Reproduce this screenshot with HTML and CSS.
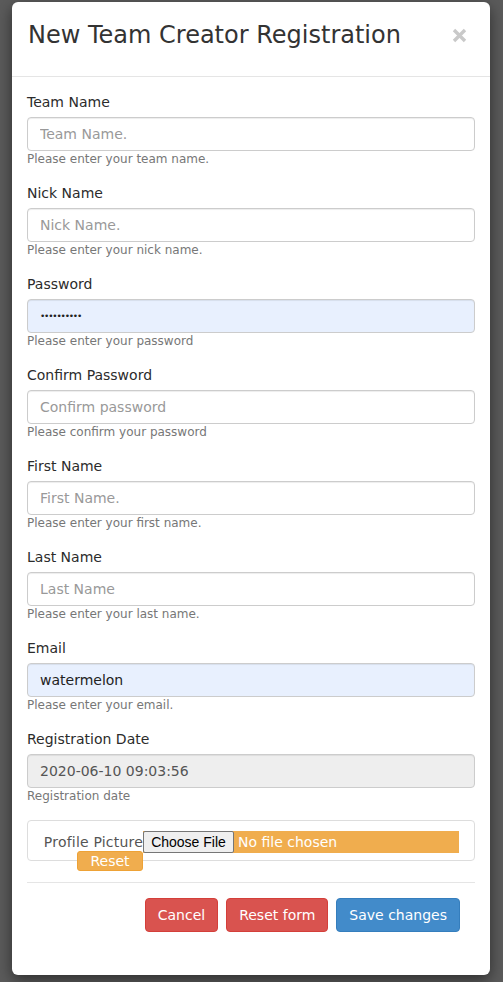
FILE: index.html
```html
<!DOCTYPE html>
<html lang="en">
<head>
<meta charset="utf-8">
<title>New Team Creator Registration</title>
<link rel="stylesheet" href="styles.css">
</head>
<body>
<div class="modal">
  <div class="modal-header">
    <h4 class="modal-title">New Team Creator Registration</h4>
    <button class="close" type="button" aria-label="Close">
      <svg width="15" height="15" viewBox="0 0 15 15"><path d="M2 2 L13 13 M13 2 L2 13" stroke="#c9c9c9" stroke-width="3.4" stroke-linecap="butt"/></svg>
    </button>
  </div>
  <form class="modal-body">
    <div class="form-group">
      <label class="label">Team Name</label>
      <input class="input" type="text" placeholder="Team Name.">
      <span class="help">Please enter your team name.</span>
    </div>
    <div class="form-group">
      <label class="label">Nick Name</label>
      <input class="input" type="text" placeholder="Nick Name.">
      <span class="help">Please enter your nick name.</span>
    </div>
    <div class="form-group">
      <label class="label">Password</label>
      <input class="input input-auto input-pass" type="password" value="abcdefghij">
      <span class="help">Please enter your password</span>
    </div>
    <div class="form-group">
      <label class="label">Confirm Password</label>
      <input class="input" type="password" placeholder="Confirm password">
      <span class="help">Please confirm your password</span>
    </div>
    <div class="form-group">
      <label class="label">First Name</label>
      <input class="input" type="text" placeholder="First Name.">
      <span class="help">Please enter your first name.</span>
    </div>
    <div class="form-group">
      <label class="label">Last Name</label>
      <input class="input" type="text" placeholder="Last Name">
      <span class="help">Please enter your last name.</span>
    </div>
    <div class="form-group">
      <label class="label">Email</label>
      <input class="input input-auto" type="text" value="watermelon">
      <span class="help">Please enter your email.</span>
    </div>
    <div class="form-group">
      <label class="label">Registration Date</label>
      <input class="input input-readonly" type="text" value="2020-06-10 09:03:56" readonly>
      <span class="help">Registration date</span>
    </div>
    <div class="file-box">
      <div class="file-label-col">
        <span class="file-label">Profile Picture</span>
        <button class="btn-reset-small" type="button">Reset</button>
      </div>
      <div class="file-input">
        <span class="file-btn">Choose File</span>
        <span class="file-text">No file chosen</span>
      </div>
    </div>
    <hr class="divider">
    <div class="footer">
      <button class="btn btn-danger" type="button">Cancel</button>
      <button class="btn btn-danger" type="button">Reset form</button>
      <button class="btn btn-primary" type="button">Save changes</button>
    </div>
  </form>
</div>
</body>
</html>
```
FILE: styles.css
```css
html, body {
  margin: 0;
  padding: 0;
}
body {
  background: #5b5b5b;
  font-family: "DejaVu Sans", Verdana, sans-serif;
  font-size: 14px;
  color: #333;
  height: 982px;
  overflow: hidden;
}
.modal {
  box-sizing: border-box;
  width: 478px;
  margin: 2px 0 0 12px;
  background: #fff;
  border-radius: 6px;
  box-shadow: 0 5px 15px rgba(0, 0, 0, 0.5);
}
.modal-header {
  display: flex;
  align-items: center;
  justify-content: space-between;
  padding: 11px 23px 19px 16px;
  border-bottom: 1px solid #e5e5e5;
}
.modal-title {
  margin: 0;
  font-size: 24px;
  line-height: 44px;
  font-weight: normal;
  color: #333;
}
.close {
  display: flex;
  padding: 0;
  margin: 0;
  border: 0;
  background: none;
}
.modal-body {
  display: block;
  margin: 0;
  padding: 15px 15px 15px;
}
.form-group {
  display: flex;
  flex-direction: column;
  margin-bottom: 15px;
}
.label {
  display: block;
  font-size: 14px;
  line-height: 20px;
  margin-bottom: 5px;
  color: #2b2b2b;
}
.input {
  box-sizing: border-box;
  width: 100%;
  height: 34px;
  margin: 0;
  padding: 6px 12px;
  border: 1px solid #ccc;
  border-radius: 4px;
  font-family: "DejaVu Sans", Verdana, sans-serif;
  font-size: 14px;
  color: #555;
  background: #fff;
  box-shadow: inset 0 1px 1px rgba(0, 0, 0, 0.075);
  outline: none;
}
.input::placeholder {
  color: #999;
}
.input-auto {
  background: #e8f0fe;
  color: #222;
}
.input-pass {
  font-size: 9px;
  letter-spacing: -1.2px;
  color: #222;
}
.input-readonly {
  background: #eee;
  color: #555;
}
.help {
  display: block;
  font-size: 12px;
  line-height: 17px;
  color: #777;
}
.file-box {
  box-sizing: border-box;
  display: flex;
  align-items: flex-start;
  height: 41px;
  padding: 10px 15px;
  border: 1px solid #ddd;
  border-radius: 4px;
}
.file-label-col {
  display: flex;
  flex-direction: column;
  align-items: flex-end;
  width: 100px;
  flex: none;
}
.file-label {
  line-height: 22px;
  font-size: 14px;
  letter-spacing: 0.2px;
  color: #555;
  white-space: nowrap;
}
.btn-reset-small {
  margin: -2px 0 0;
  width: 66px;
  height: 20px;
  padding: 0;
  border: 1px solid #eea236;
  border-radius: 3px;
  background: #f0ad4e;
  color: #fff;
  font-family: "DejaVu Sans", Verdana, sans-serif;
  font-size: 14px;
  line-height: 18px;
}
.file-input {
  display: flex;
  align-items: center;
  width: 316px;
  height: 22px;
  background: #f0ad4e;
}
.file-btn {
  box-sizing: border-box;
  display: flex;
  align-items: center;
  justify-content: center;
  width: 91px;
  height: 22px;
  border: 1px solid #767676;
  border-radius: 2px;
  background: #efefef;
  color: #000;
  font-family: "Liberation Sans", Arial, sans-serif;
  font-size: 14px;
}
.file-text {
  margin-left: 4px;
  color: #fff;
  font-size: 14px;
  white-space: nowrap;
}
.divider {
  margin: 21px 0 0;
  border: 0;
  border-top: 1px solid #e5e5e5;
}
.footer {
  display: flex;
  justify-content: flex-end;
  gap: 8px;
  margin-top: 15px;
  padding: 0 15px 28px 0;
}
.btn {
  box-sizing: border-box;
  height: 34px;
  padding: 6px 12px;
  border: 1px solid transparent;
  border-radius: 4px;
  font-family: "DejaVu Sans", Verdana, sans-serif;
  font-size: 14px;
  line-height: 20px;
  color: #fff;
  cursor: pointer;
}
.btn-danger {
  background: #d9534f;
  border-color: #d43f3a;
}
.btn-primary {
  background: #428bca;
  border-color: #357ebd;
}
```
